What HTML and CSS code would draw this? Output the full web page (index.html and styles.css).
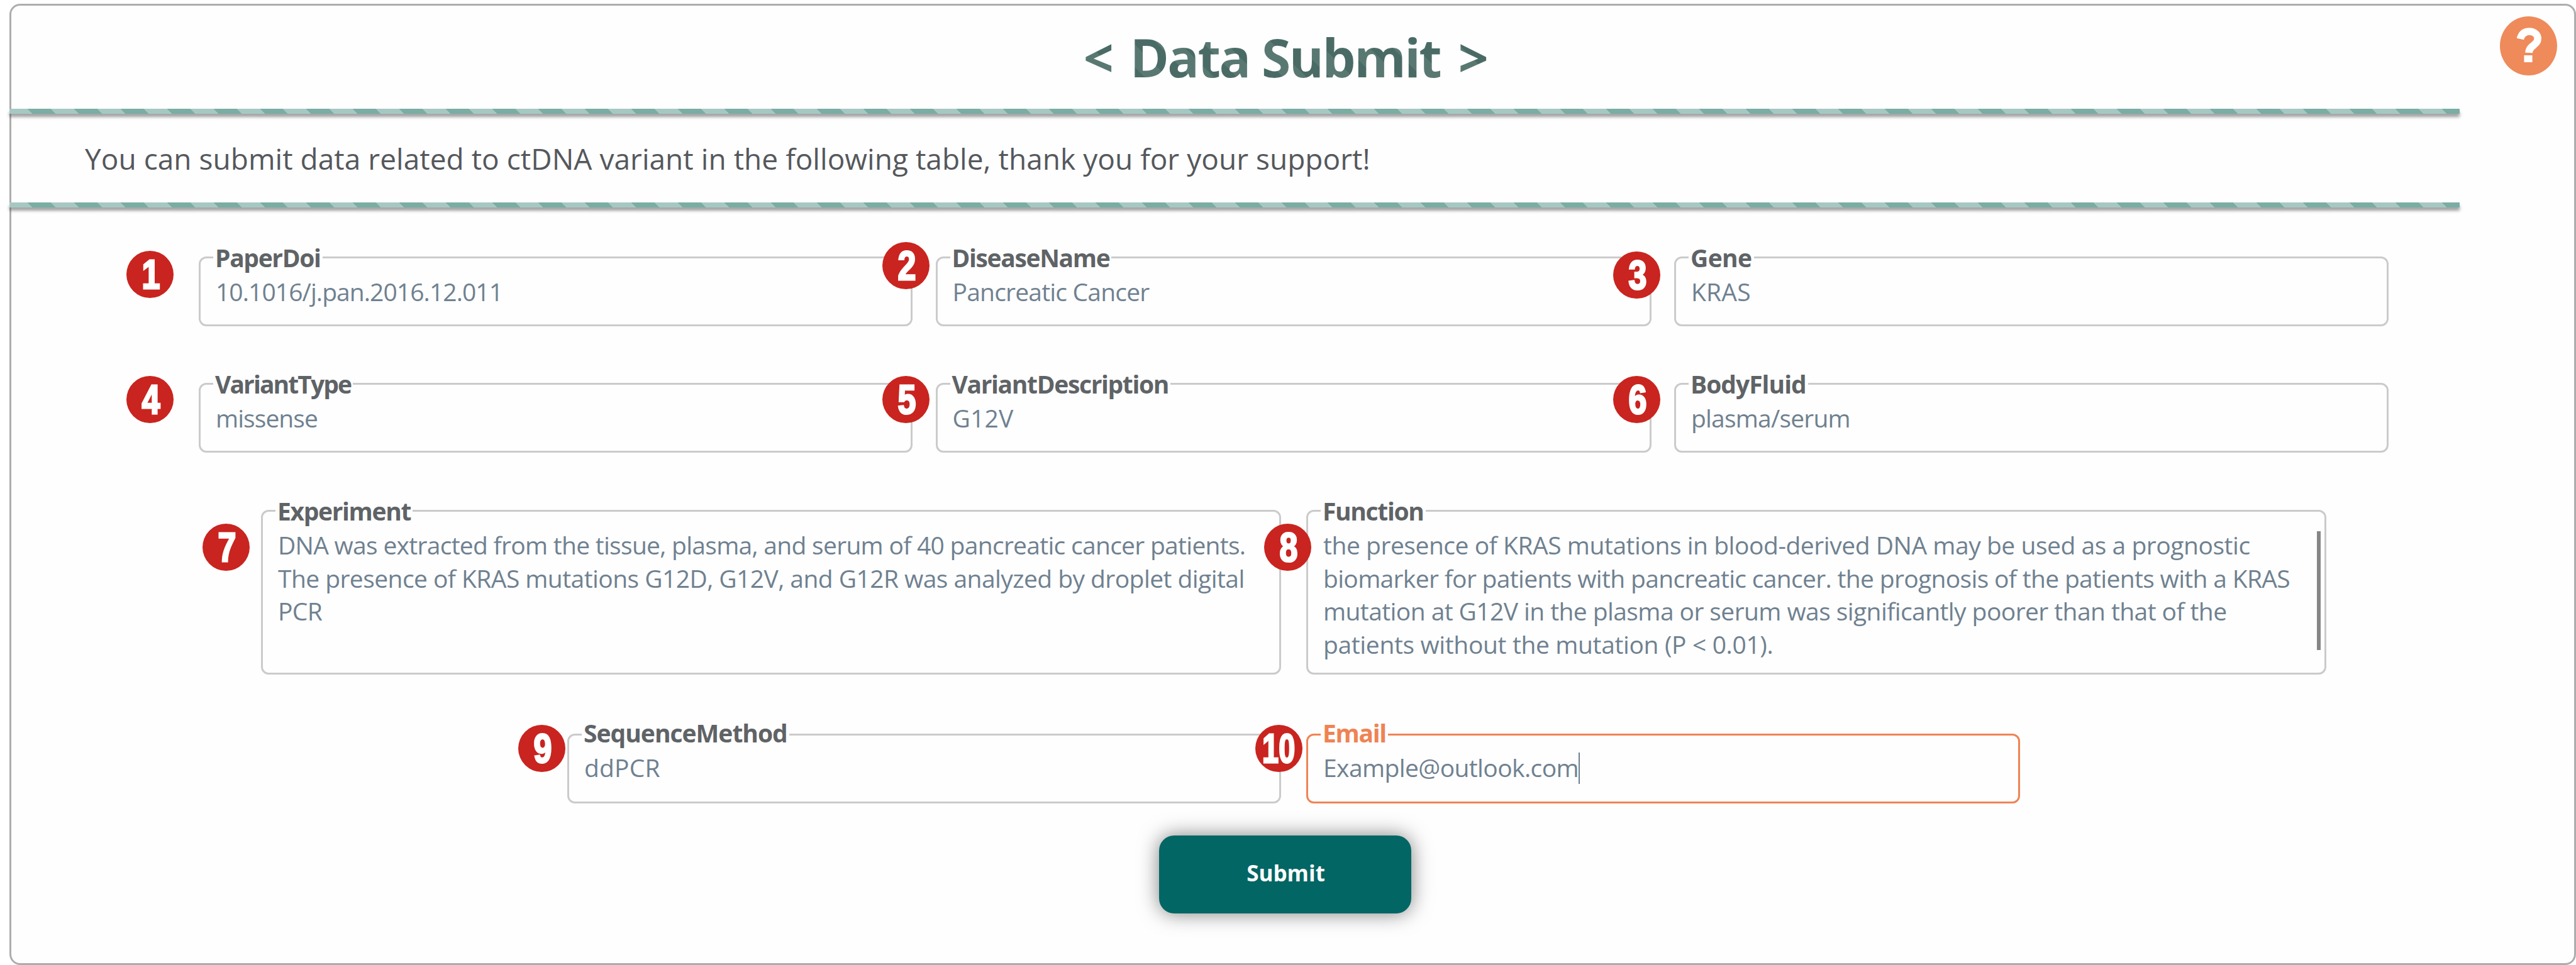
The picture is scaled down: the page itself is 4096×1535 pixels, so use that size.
FILE: index.html
```html
<!DOCTYPE html>
<html lang="en">
<head>
<meta charset="utf-8">
<title>Data Submit</title>
<link rel="stylesheet" href="styles.css">
</head>
<body>
<main class="panel">
  <svg class="help" viewBox="0 0 90 94" preserveAspectRatio="none" role="img" aria-label="Help">
    <ellipse cx="45" cy="47" rx="45" ry="47" fill="#ef8a5b"/>
    <path d="M32 36 C34 27.500 39 24 46.500 24 C54 24 59.500 29 59.500 35.500 C59.500 46 46 46 45.500 58" fill="none" stroke="#fff" stroke-width="11.500"/>
    <rect x="38" y="62" width="13" height="11" fill="#fff"/>
  </svg>
  <header class="head"><h1 class="title"><span class="open">&lt;</span> Data Submit <span class="close">&gt;</span></h1></header>
  <div class="bar"></div>
  <p class="intro">You can submit data related to ctDNA variant in the following table, thank you for your support!</p>
  <div class="bar"></div>
  <form class="form">
    <div class="row three">
      <div class="field"><i class="num far"><b>1</b></i><label>PaperDoi</label><div class="value doi">10.1016/j.pan.2016.12.011</div></div>
      <div class="field"><i class="num raised"><b>2</b></i><label>DiseaseName</label><div class="value snug">Pancreatic Cancer</div></div>
      <div class="field"><i class="num third"><b>3</b></i><label class="short">Gene</label><div class="value plain">KRAS</div></div>
    </div>
    <div class="row three">
      <div class="field"><i class="num far"><b>4</b></i><label class="tight">VariantType</label><div class="value doi">missense</div></div>
      <div class="field"><i class="num"><b>5</b></i><label>VariantDescription</label><div class="value plain">G12V</div></div>
      <div class="field"><i class="num third"><b>6</b></i><label class="loose">BodyFluid</label><div class="value snug">plasma/serum</div></div>
    </div>
    <div class="row two">
      <div class="field area"><i class="num seven"><b>7</b></i><label>Experiment</label><div class="value"><span class="l1">DNA was extracted from the tissue, plasma, and serum of 40 pancreatic cancer patients.</span><br><span class="l2">The presence of KRAS mutations G12D, G12V, and G12R was analyzed by droplet digital</span><br>PCR</div></div>
      <div class="field area"><i class="num eight"><b>8</b></i><label>Function</label><div class="value"><span class="l3">the presence of KRAS mutations in blood-derived DNA may be used as a prognostic</span><br><span class="l4">biomarker for patients with pancreatic cancer. the prognosis of the patients with a KRAS</span><br><span class="l5">mutation at G12V in the plasma or serum was significantly poorer than that of the</span><br><span class="l6">patients without the mutation (P &lt; 0.01).</span></div><i class="thumb"></i></div>
    </div>
    <div class="row last">
      <div class="field"><i class="num nine"><b>9</b></i><label class="loose">SequenceMethod</label><div class="value plain">ddPCR</div></div>
      <div class="field active"><i class="num ten"><b>10</b></i><label>Email</label><div class="value">Example@outlook.com<i class="caret"></i></div></div>
    </div>
    <button class="submit" type="button">Submit</button>
  </form>
</main>
</body>
</html>
```
FILE: styles.css
```css
* { box-sizing: border-box; }
body { margin: 0; background: #fff; font-family: "Open Sans", "Noto Sans", sans-serif; }
.panel {
  position: relative;
  width: 4081px; height: 1529px;
  margin: 6px 0 0 15px;
  border: 3px solid #adadad;
  border-radius: 17px;
  background: #fefefe;
}
.help { position: absolute; left: 3957px; top: 17px; width: 91px; height: 94px; }
.head { height: 164px; width: 3897px; margin-left: -3px; display: flex; justify-content: center; padding: 0 0 0 160px; }
.title {
  margin: 0; font-size: 84px; line-height: 164px; font-weight: 700; white-space: nowrap; letter-spacing: -2.500px;
  color: transparent;
  background: repeating-linear-gradient(45deg, #597872 0 26px, #4a6b65 26px 52px);
  -webkit-background-clip: text; background-clip: text;
}
.open { margin-right: 9px; }
.close { margin-left: 9px; }
.bar {
  width: 3896px; height: 8px; margin-left: -3px;
  background: repeating-linear-gradient(45deg, #a6c8c2 0 26.100px, #7aada4 26.100px 52.200px);
  box-shadow: 0 5px 5px rgba(0, 0, 0, .38);
}
.intro { margin: 0; height: 141px; padding-left: 117px; font-size: 46px; line-height: 142px; letter-spacing: .03px; color: #55585c; white-space: nowrap; }
.form { display: flex; flex-direction: column; }
.row { display: flex; }
.three { display: grid; grid-template-columns: 1135px 1138px 1136px; margin: 78px 0 0 298px; gap: 36.500px; }
.three + .three { margin-top: 90px; }
.two { margin: 91px 0 0 397px; gap: 40px; }
.last { margin: 94px 0 0 884px; gap: 40px; }
.field { position: relative; height: 111px; border: 3px solid #cbcbcb; border-radius: 12px; }
.area { width: 1622px; height: 262px; }
.last .field { width: 1135px; }
.last .active { border-color: #ef8354; }
.field label {
  position: absolute; left: 20px; top: -27px; padding: 0 3px;
  background: #fefefe; color: #5f6366; font-size: 39px; line-height: 52px; font-weight: 700; white-space: nowrap;
  letter-spacing: -1.350px;
}
.field .short { letter-spacing: -.6px; }
.field .loose { letter-spacing: -1px; }
.field .tight { letter-spacing: -1.9px; }
.value { padding: 27px 0 0 24px; font-size: 39px; line-height: 52.500px; letter-spacing: -.6px; color: #6f8190; white-space: nowrap; }
.doi { letter-spacing: -.93px; }
.snug { letter-spacing: -.8px; }
.plain { letter-spacing: .2px; }
.l1 { letter-spacing: -.710px; }
.l2 { letter-spacing: -.560px; }
.l3 { letter-spacing: -.460px; }
.l4 { letter-spacing: -.670px; }
.l5 { letter-spacing: -.580px; }
.l6 { letter-spacing: -.360px; }
.last label { top: -30px; }
.last .value { padding-top: 25px; }
.active label { color: #ef8354; }
.caret { display: inline-block; width: 2px; height: 50px; margin-right: -2px; background: #6b7f8f; vertical-align: -11px; }
.thumb { position: absolute; right: 6px; top: 31px; width: 6px; height: 189px; background: #868686; }
.num {
  position: absolute; z-index: 1; left: -88px; top: -14px; width: 75px; height: 75px; border-radius: 50%;
  display: flex; align-items: center; justify-content: center;
  background: #c9241f; color: #fff; font: normal 65px/75px "Liberation Sans", sans-serif;
}
.num b { margin-left: 4px; transform: scaleX(.8); -webkit-text-stroke: 3px #fff; }
.ten b { margin-left: 0; transform: scaleX(.72); }
.far { left: -118px; top: -12px; }
.raised { top: -26px; }
.three + .three .num { top: -14px; }
.third { left: -100px; top: -11px; }
.seven { left: -96px; top: 19px; }
.eight { left: -70px; top: 19px; }
.nine { left: -81px; top: -17px; }
.ten { left: -84px; top: -17px; }
.submit {
  width: 401px; height: 124px; margin: 51px 0 0 1825px; padding: 0 0 6px 2px; border: 0; border-radius: 24px;
  background: #026664; color: #fff; font: 700 35px "Open Sans", sans-serif;
  box-shadow: 0 0 32px rgba(0, 0, 0, .5);
}
```
